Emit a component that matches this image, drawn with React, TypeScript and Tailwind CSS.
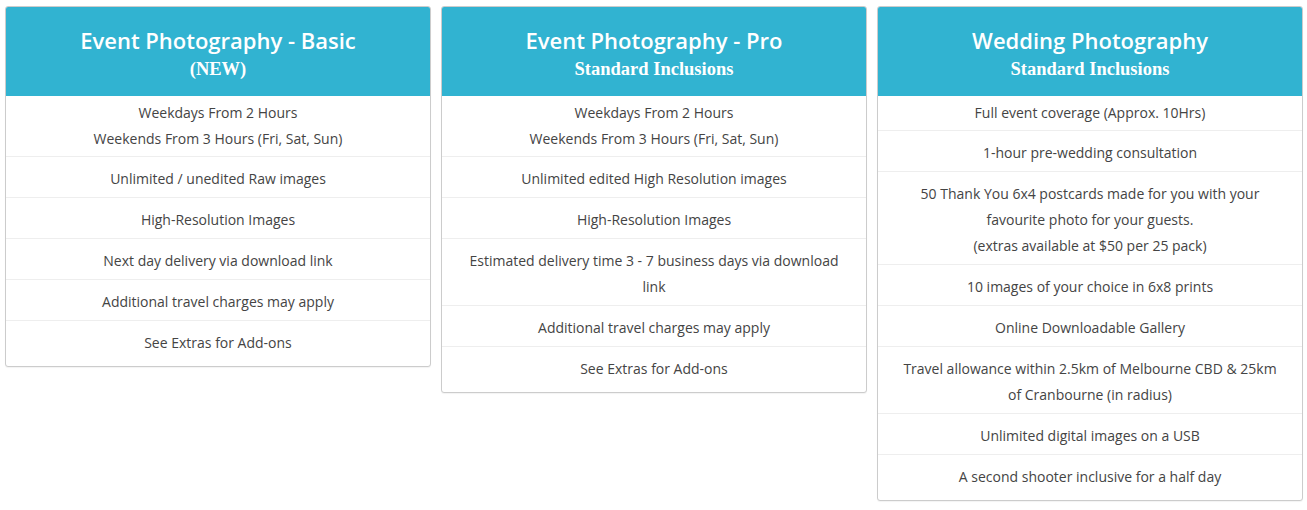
import React from 'react'

type Plan = {
  title: string
  subtitle: string
  items: string[][]
}

const plans: Plan[] = [
  {
    title: 'Event Photography - Basic',
    subtitle: '(NEW)',
    items: [
      ['Weekdays From 2 Hours', 'Weekends From 3 Hours (Fri, Sat, Sun)'],
      ['Unlimited / unedited Raw images'],
      ['High-Resolution Images'],
      ['Next day delivery via download link'],
      ['Additional travel charges may apply'],
      ['See Extras for Add-ons'],
    ],
  },
  {
    title: 'Event Photography - Pro',
    subtitle: 'Standard Inclusions',
    items: [
      ['Weekdays From 2 Hours', 'Weekends From 3 Hours (Fri, Sat, Sun)'],
      ['Unlimited edited High Resolution images'],
      ['High-Resolution Images'],
      ['Estimated delivery time 3 - 7 business days via download link'],
      ['Additional travel charges may apply'],
      ['See Extras for Add-ons'],
    ],
  },
  {
    title: 'Wedding Photography',
    subtitle: 'Standard Inclusions',
    items: [
      ['Full event coverage (Approx. 10Hrs)'],
      ['1-hour pre-wedding consultation'],
      [
        '50 Thank You 6x4 postcards made for you with your favourite photo for your guests.',
        '(extras available at $50 per 25 pack)',
      ],
      ['10 images of your choice in 6x8 prints'],
      ['Online Downloadable Gallery'],
      ['Travel allowance within 2.5km of Melbourne CBD & 25km of Cranbourne (in radius)'],
      ['Unlimited digital images on a USB'],
      ['A second shooter inclusive for a half day'],
    ],
  },
]

function PlanCard({ plan }: { plan: Plan }) {
  return (
    <div className="w-[426px] shrink-0 rounded-[3px] border border-[#cccccc] bg-white pb-[5px] shadow-[0_1px_1px_rgba(0,0,0,0.05)]">
      {/* Header */}
      <div className="rounded-t-[2px] bg-[#31b3d1] pt-[18px] pb-[15px] text-center text-white">
        <h2 className="font-['Open_Sans',sans-serif] text-[22px] font-semibold leading-[30px]">{plan.title}</h2>
        <h3 className="mt-[2px] font-['Liberation_Serif',serif] text-[18.5px] font-bold leading-[24px]">{plan.subtitle}</h3>
      </div>

      {/* Inclusions */}
      <ul className="font-['Open_Sans',sans-serif] text-[14px] leading-[26px] text-[#444444]">
        {plan.items.map((lines, i) => (
          <li
            key={i}
            className={
              i === 0
                ? 'px-[20px] py-[4px] text-center'
                : 'border-t border-[#eeeeee] px-[20px] pt-[9px] pb-[5px] text-center'
            }
          >
            {lines.map((l, j) => (
              <p key={j}>{l}</p>
            ))}
          </li>
        ))}
      </ul>
    </div>
  )
}

export default function App() {
  return (
    <div className="min-h-[510px] bg-white pt-[6px] pl-[5px]">
      <div className="flex items-start gap-[10px]">
        {plans.map((p) => (
          <PlanCard key={p.title} plan={p} />
        ))}
      </div>
    </div>
  )
}
